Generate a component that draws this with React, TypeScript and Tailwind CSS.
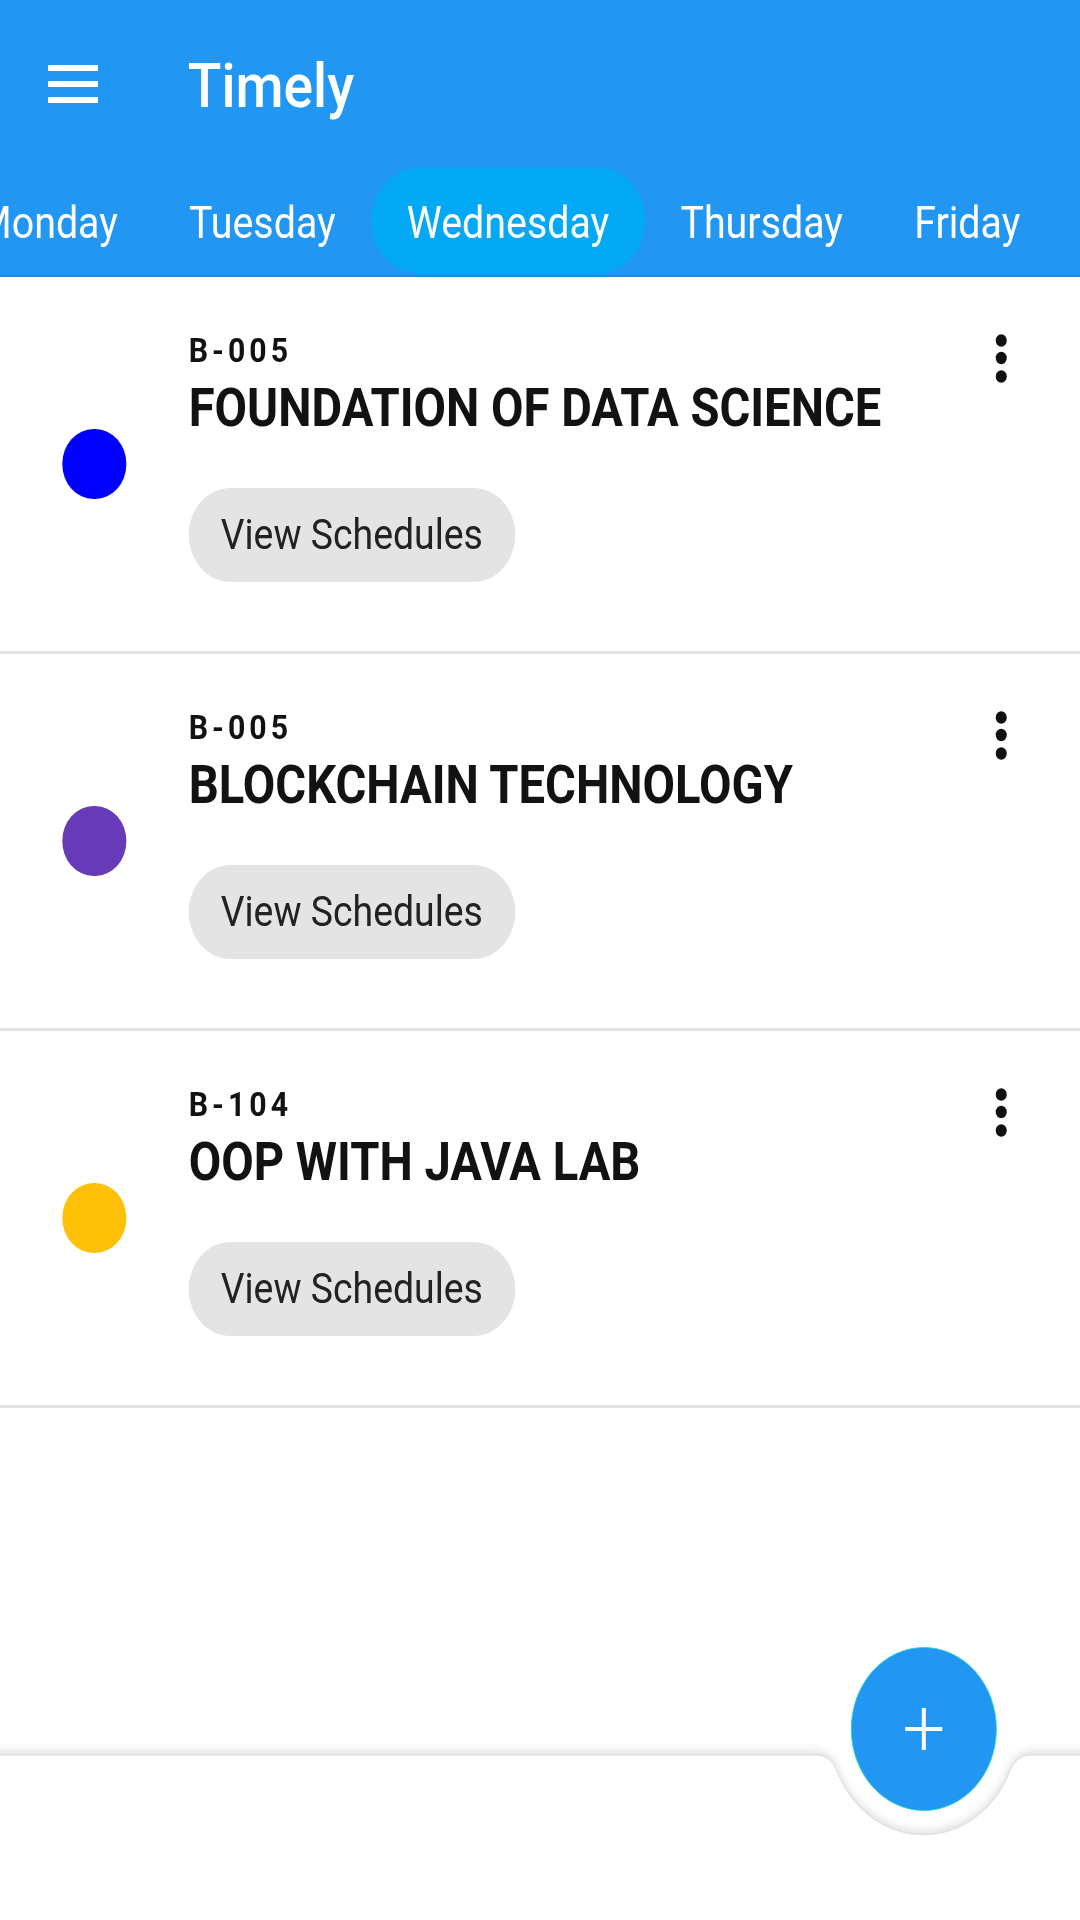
import React from "react";

const days = ["Monday", "Tuesday", "Wednesday", "Thursday", "Friday"];

const subjects = [
  { room: "B-005", title: "FOUNDATION OF DATA SCIENCE", color: "bg-[#0000ff]" },
  { room: "B-005", title: "BLOCKCHAIN TECHNOLOGY", color: "bg-[#673ab7]" },
  { room: "B-104", title: "OOP WITH JAVA LAB", color: "bg-[#ffc107]" },
];

function MoreVert() {
  return (
    <svg width="14" height="50" viewBox="0 0 14 50" className="block">
      <circle cx="7" cy="6.5" r="6.2" fill="#111" />
      <circle cx="7" cy="24" r="6.2" fill="#111" />
      <circle cx="7" cy="42.5" r="6.2" fill="#111" />
    </svg>
  );
}

function Card({ room, title, color }: { room: string; title: string; color: string }) {
  return (
    <div className="flex items-center border-b-[3px] border-[#e2e2e2]">
      <div className={`ml-[70px] mr-[70px] w-[72px] h-[70px] shrink-0 rounded-full ${color}`} />
      <div className="flex-1 flex flex-col items-start pt-[56px] pb-[69px]">
        <div className="text-[34px] leading-none font-bold tracking-[4.5px] text-[#121212]">{room}</div>
        <div className="mt-[15px] text-[53px] leading-none font-bold text-[#121212]">{title}</div>
        <button className="mt-[53px] h-[94px] px-[36px] rounded-full bg-[#e4e4e4] text-[42px] leading-none text-[#222] flex items-center">
          View Schedules
        </button>
      </div>
      <div className="self-start mt-[57px] mr-[82px]">
        <MoreVert />
      </div>
    </div>
  );
}

export default function App() {
  const cx = 1037.6;
  const path = `M-40,55 H${cx - 119.8} A24,24 0 0 1 ${cx - 97.7},69.7 A106,106 0 0 0 ${cx + 97.7},69.7 A24,24 0 0 1 ${cx + 119.8},55 H1260 V400 H-40 Z`;
  return (
    <div className="w-[1080px] h-[1920px] overflow-hidden bg-white" style={{ fontFamily: "Roboto, 'Noto Sans', sans-serif" }}>
      <div className="relative w-[1213.5px] h-[1920px] origin-top-left scale-x-[0.89] bg-white">
        <header className="bg-[#2196f3] border-b-2 border-[#1c88ee] pb-[2px]">
          <div className="h-[168px] flex items-center">
            <div className="ml-[54px] w-[56px] flex flex-col gap-[10px]">
              <div className="h-[6px] bg-white" />
              <div className="h-[6px] bg-white" />
              <div className="h-[6px] bg-white" />
            </div>
            <div className="ml-[101px] mt-[4px] text-[62px] leading-none font-medium text-white">Timely</div>
          </div>
          <div className="h-[105px] flex -ml-[65.5px] whitespace-nowrap">
            {days.map((d) => (
              <div
                key={d}
                className={`h-[105px] px-[40px] pt-[5px] flex items-center rounded-full text-[44.25px] leading-none text-white ${
                  d === "Wednesday" ? "bg-[#03a9f4]" : ""
                }`}
              >
                {d}
              </div>
            ))}
          </div>
        </header>

        <main>
          {subjects.map((s, i) => (
            <Card key={i} {...s} />
          ))}
        </main>

        <div className="absolute left-0 bottom-0 w-[1213.5px] h-[220px] overflow-visible">
          <svg width="1214" height="220" viewBox="0 0 1214 220" className="absolute left-0 top-0 overflow-visible">
            <defs>
              <filter id="barShadow" x="-10%" y="-30%" width="120%" height="160%">
                <feDropShadow dx="0" dy="-3" stdDeviation="5" floodColor="#000" floodOpacity="0.14" />
              </filter>
            </defs>
            <path d={path} fill="#ffffff" filter="url(#barShadow)" />
            <path d={path} fill="none" stroke="#e2e2e2" strokeWidth="1.5" />
          </svg>
        </div>

        <button className="absolute left-[955.6px] top-[1646.5px] w-[164px] h-[164px] rounded-full bg-[#2196f3] border-[1.5px] border-[#2ad3c6] flex items-center justify-center">
          <svg width="42" height="42" viewBox="0 0 42 42">
            <line x1="21" y1="0" x2="21" y2="42" stroke="#fff" strokeWidth="4.5" />
            <line x1="0" y1="21" x2="42" y2="21" stroke="#fff" strokeWidth="4.2" />
          </svg>
        </button>
      </div>
    </div>
  );
}
